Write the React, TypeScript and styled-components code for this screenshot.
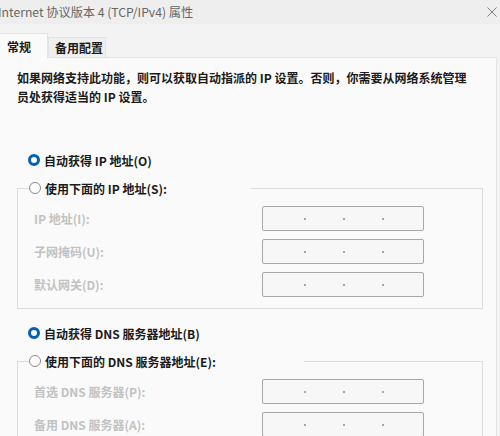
import React from 'react';
import styled, { createGlobalStyle } from 'styled-components';

const GlobalStyle = createGlobalStyle`
  html, body {
    margin: 0;
    padding: 0;
    background: #f3f3f3;
  }
  body {
    font-family: "Noto Sans CJK SC", "Noto Sans", sans-serif;
    font-size: 12px;
    color: #1b1b1b;
  }
`;

const Window = styled.div`
  width: 500px;
  height: 436px;
  overflow: hidden;
  display: flex;
  flex-direction: column;
  background: #f3f3f3;
`;

const TitleBar = styled.div`
  height: 24px;
  flex-shrink: 0;
  display: flex;
  align-items: center;
  justify-content: space-between;
  background: #eeeeee;
  padding-right: 3px;
`;

const TitleText = styled.span`
  font-size: 12.2px;
  color: #666;
  margin-left: -2px;
  white-space: nowrap;
`;

const CloseButton = styled.span`
  display: flex;
  align-items: center;
  color: #777;
`;

const Body = styled.div`
  padding-top: 10px;
  display: flex;
  flex-direction: column;
  flex: 1;
  padding-right: 3px;
`;

const TabRow = styled.div`
  display: flex;
  align-items: flex-end;
  height: 24px;
  position: relative;
  z-index: 1;
  margin-bottom: -1px;
`;

const Tab = styled.div<{ $active?: boolean }>`
  box-sizing: border-box;
  height: ${(p) => (p.$active ? '25px' : '21px')};
  padding: 0 ${(p) => (p.$active ? '7px' : '6px')};
  display: flex;
  align-items: center;
  white-space: nowrap;
  font-weight: 700;
  font-size: 12px;
  background: ${(p) => (p.$active ? '#fafafa' : '#efefef')};
  border: 1px solid #e3e3e3;
  border-bottom: ${(p) => (p.$active ? 'none' : '1px solid #e3e3e3')};
  border-left: ${(p) => (p.$active ? 'none' : '1px solid #e3e3e3')};
  width: ${(p) => (p.$active ? '48px' : '58px')};
`;

const Panel = styled.div`
  flex: 1;
  background: #fafafa;
  border-top: 1px solid #e3e3e3;
  border-right: 1px solid #e3e3e3;
  padding: 10px 0 0 17px;
`;

const Description = styled.p`
  margin: 0;
  font-weight: 700;
  line-height: 19px;
  width: 450px;
`;

const RadioRow = styled.label<{ $top?: number }>`
  display: flex;
  align-items: center;
  height: 28px;
  margin-top: ${(p) => p.$top ?? 0}px;
  margin-left: 11px;
  font-weight: 700;
  white-space: nowrap;
`;

const Radio = styled.span<{ $checked?: boolean }>`
  box-sizing: border-box;
  width: 12px;
  height: 12px;
  border-radius: 50%;
  margin-right: 4px;
  flex-shrink: 0;
  background: #fff;
  border: ${(p) => (p.$checked ? '3.5px solid #005fb8' : '1px solid #8a8a8a')};
`;

const Group = styled.fieldset`
  margin: 0;
  width: 466px;
  box-sizing: border-box;
  border: 1px solid #dcdcdc;
  padding: 4px 0 11px 16px;
`;

const Legend = styled.legend<{ $width: number }>`
  padding: 0;
  margin-left: -5px;
  width: ${(p) => p.$width}px;
  background: #fafafa;
`;

const LegendRadio = styled(RadioRow)`
  margin-left: 0;
`;

const Fields = styled.div`
  display: flex;
  flex-direction: column;
  gap: 8px;
`;

const FieldRow = styled.div`
  display: flex;
  align-items: center;
  height: 25px;
`;

const FieldLabel = styled.span`
  width: 228px;
  color: #c2c2c2;
  font-weight: 700;
`;

const IpBox = styled.div`
  box-sizing: border-box;
  width: 162px;
  height: 25px;
  border: 1px solid #a8a8a8;
  border-radius: 2px;
  background: #f7f7f7;
  display: flex;
  align-items: center;
  padding-left: 40px;
  gap: 35px;
`;

const Dot = styled.span`
  width: 4px;
  display: flex;
  justify-content: center;
  &::before {
    content: '';
    width: 2px;
    height: 2px;
    border-radius: 50%;
    background: #8a8a8a;
  }
`;

const IpField: React.FC = () => (
  <IpBox>
    <Dot />
    <Dot />
    <Dot />
  </IpBox>
);

const ipFields = ['IP 地址(I):', '子网掩码(U):', '默认网关(D):'];
const dnsFields = ['首选 DNS 服务器(P):', '备用 DNS 服务器(A):'];

const App: React.FC = () => {
  return (
    <Window>
      <GlobalStyle />
      <TitleBar>
        <TitleText>Internet 协议版本 4 (TCP/IPv4) 属性</TitleText>
        <CloseButton>
          <svg width="10" height="10" viewBox="0 0 10 10">
            <path d="M0.5 0.5 L9.5 9.5 M9.5 0.5 L0.5 9.5" stroke="#808080" strokeWidth="1" fill="none" />
          </svg>
        </CloseButton>
      </TitleBar>
      <Body>
        <TabRow>
          <Tab $active>常规</Tab>
          <Tab>备用配置</Tab>
        </TabRow>
        <Panel>
          <Description>
            如果网络支持此功能，则可以获取自动指派的 IP 设置。否则，你需要从网络系统管理员处获得适当的 IP 设置。
          </Description>
          <RadioRow $top={40}>
            <Radio $checked />
            自动获得 IP 地址(O)
          </RadioRow>
          <Group>
            <Legend $width={222}>
              <LegendRadio>
                <Radio />
                使用下面的 IP 地址(S):
              </LegendRadio>
            </Legend>
            <Fields>
              {ipFields.map((f) => (
                <FieldRow key={f}>
                  <FieldLabel>{f}</FieldLabel>
                  <IpField />
                </FieldRow>
              ))}
            </Fields>
          </Group>
          <RadioRow $top={10}>
            <Radio $checked />
            自动获得 DNS 服务器地址(B)
          </RadioRow>
          <Group>
            <Legend $width={275}>
              <LegendRadio>
                <Radio />
                使用下面的 DNS 服务器地址(E):
              </LegendRadio>
            </Legend>
            <Fields>
              {dnsFields.map((f) => (
                <FieldRow key={f}>
                  <FieldLabel>{f}</FieldLabel>
                  <IpField />
                </FieldRow>
              ))}
            </Fields>
          </Group>
        </Panel>
      </Body>
    </Window>
  );
};

export default App;
